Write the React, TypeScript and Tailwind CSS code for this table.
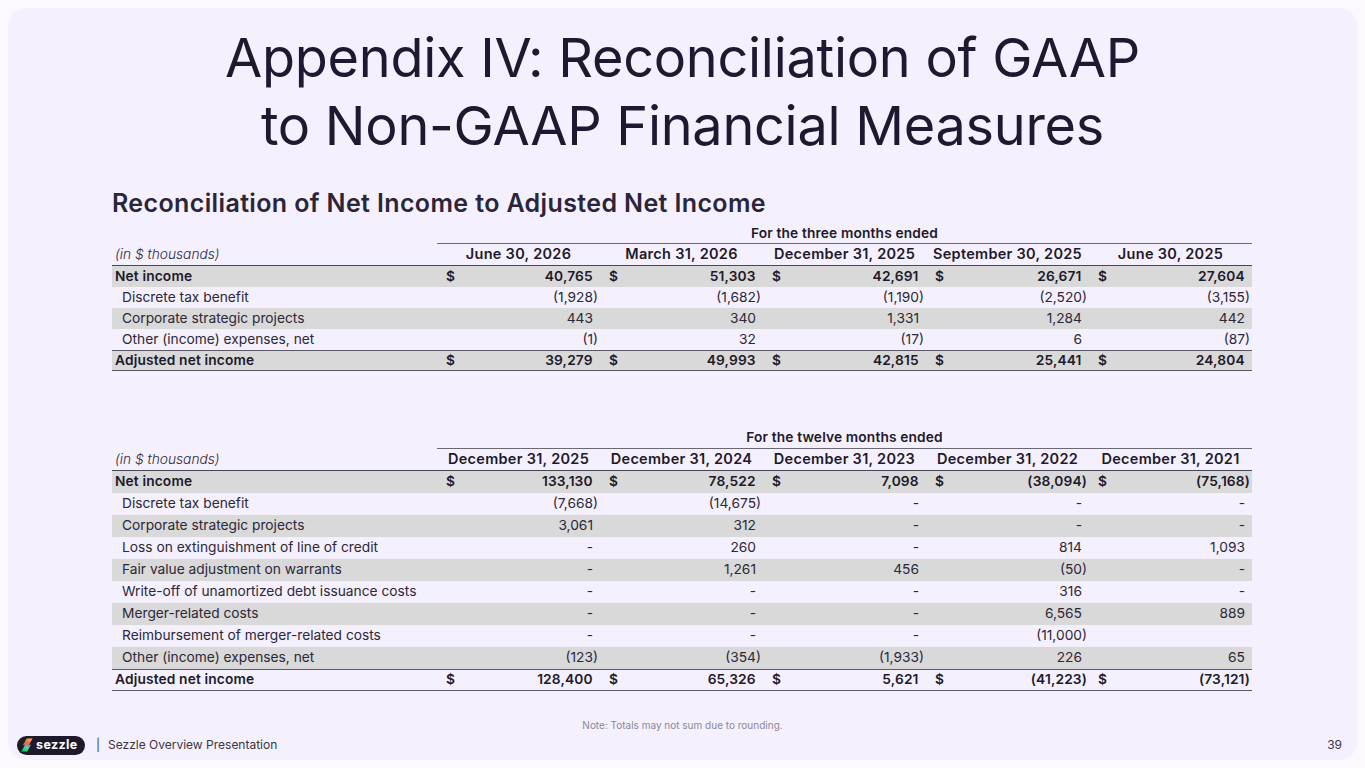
import React from "react";

type Row = {
  label: string;
  vals: string[];
  bold?: boolean;
  dollar?: boolean;
  gray?: boolean;
  total?: boolean;
};

const t1Headers = ["June 30, 2026", "March 31, 2026", "December 31, 2025", "September 30, 2025", "June 30, 2025"];
const t1Rows: Row[] = [
  { label: "Net income", vals: ["40,765", "51,303", "42,691", "26,671", "27,604"], bold: true, dollar: true, gray: true },
  { label: "Discrete tax benefit", vals: ["(1,928)", "(1,682)", "(1,190)", "(2,520)", "(3,155)"] },
  { label: "Corporate strategic projects", vals: ["443", "340", "1,331", "1,284", "442"], gray: true },
  { label: "Other (income) expenses, net", vals: ["(1)", "32", "(17)", "6", "(87)"] },
  { label: "Adjusted net income", vals: ["39,279", "49,993", "42,815", "25,441", "24,804"], bold: true, dollar: true, gray: true, total: true },
];

const t2Headers = ["December 31, 2025", "December 31, 2024", "December 31, 2023", "December 31, 2022", "December 31, 2021"];
const t2Rows: Row[] = [
  { label: "Net income", vals: ["133,130", "78,522", "7,098", "(38,094)", "(75,168)"], bold: true, dollar: true, gray: true },
  { label: "Discrete tax benefit", vals: ["(7,668)", "(14,675)", "-", "-", "-"] },
  { label: "Corporate strategic projects", vals: ["3,061", "312", "-", "-", "-"], gray: true },
  { label: "Loss on extinguishment of line of credit", vals: ["-", "260", "-", "814", "1,093"] },
  { label: "Fair value adjustment on warrants", vals: ["-", "1,261", "456", "(50)", "-"], gray: true },
  { label: "Write-off of unamortized debt issuance costs", vals: ["-", "-", "-", "316", "-"] },
  { label: "Merger-related costs", vals: ["-", "-", "-", "6,565", "889"], gray: true },
  { label: "Reimbursement of merger-related costs", vals: ["-", "-", "-", "(11,000)", ""] },
  { label: "Other (income) expenses, net", vals: ["(123)", "(354)", "(1,933)", "226", "65"], gray: true },
  { label: "Adjusted net income", vals: ["128,400", "65,326", "5,621", "(41,223)", "(73,121)"], bold: true, dollar: true, total: true },
];

function Num({ v }: { v: string }) {
  const paren = v.endsWith(")");
  return (
    <span>
      {v}
      {!paren && v !== "" && <span className="invisible">)</span>}
    </span>
  );
}

function TableRow({ row, tall }: { row: Row; tall?: boolean }) {
  return (
    <div
      className={`grid grid-cols-[325px_repeat(5,163px)] items-center ${tall ? "h-[22px]" : "h-[21px]"} ${
        row.gray ? "bg-[#d9d9d9]" : ""
      } ${row.total ? "border-t border-b border-[#5c5966]" : ""} ${
        row.bold ? "font-semibold text-[#1d1a2b] tracking-[0.01em]" : "text-[#2b2838]"
      }`}
    >
      <div className={row.bold ? "pl-[3px]" : "pl-[10px]"}>{row.label}</div>
      {row.vals.map((v, i) => (
        <div key={i} className="flex justify-between pl-[9px] pr-[2px]">
          <span>{row.dollar ? "$" : ""}</span>
          <Num v={v} />
        </div>
      ))}
    </div>
  );
}

function Table({ title, headers, rows, tall }: { title: string; headers: string[]; rows: Row[]; tall?: boolean }) {
  return (
    <div className="w-[1140px] text-[13.75px] leading-none">
      <div className="grid grid-cols-[325px_815px]">
        <div />
        <div
          className={`text-center font-semibold text-[#1d1a2b] border-b border-[#6b6875] flex items-center justify-center tracking-[0.01em] ${
            tall ? "h-[21px]" : "h-[20px]"
          }`}
        >
          {title}
        </div>
      </div>
      <div className="grid grid-cols-[325px_repeat(5,163px)] items-center h-[22px] border-b border-[#4a4755]">
        <div className="pl-[3px] italic font-light text-[#2b2838]">(in $ thousands)</div>
        {headers.map((h) => (
          <div key={h} className="text-center font-semibold text-[14.5px] tracking-[0.02em] text-[#1d1a2b]">
            {h}
          </div>
        ))}
      </div>
      {rows.map((r) => (
        <TableRow key={r.label} row={r} tall={tall} />
      ))}
    </div>
  );
}

function SezzleLogo() {
  return (
    <div className="flex items-center h-[19px] w-[68px] rounded-full bg-[#1d1a2b] pl-[4px] gap-[3px]">
      <svg width="12" height="14" viewBox="0 0 12 14">
        <defs>
          <linearGradient id="gtop" x1="0" y1="1" x2="1" y2="0">
            <stop offset="0" stopColor="#a855f7" />
            <stop offset="0.45" stopColor="#f97316" />
            <stop offset="1" stopColor="#fdba74" />
          </linearGradient>
          <linearGradient id="gbot" x1="0" y1="1" x2="1" y2="0">
            <stop offset="0" stopColor="#10b981" />
            <stop offset="0.6" stopColor="#4ade80" />
            <stop offset="1" stopColor="#8b5cf6" />
          </linearGradient>
        </defs>
        <path d="M5.6 0.5 L11.5 0.5 L7.8 7.2 L1.9 7.2 Z" fill="url(#gtop)" />
        <path d="M4.2 6.8 L10.1 6.8 L6.2 13.5 L0.3 13.5 Z" fill="url(#gbot)" />
      </svg>
      <span className="text-white font-bold text-[12.5px] leading-none tracking-[0.03em]">sezzle</span>
    </div>
  );
}

export default function App() {
  return (
    <div className="w-[1365px] h-[768px] bg-[#fbf9fe] p-[8px]" style={{ fontFamily: "Inter, 'Noto Sans', sans-serif" }}>
      <div className="relative h-full w-full rounded-[18px] bg-[#f5f0fd] flex flex-col">
        <h1 className="pt-[16px] text-center text-[54px] leading-[68px] font-normal text-[#1e1830] tracking-[-0.005em]">
          Appendix IV: Reconciliation of GAAP
          <br />
          to Non-GAAP Financial Measures
        </h1>
        <div className="pl-[104px]">
          <h2 className="mt-[28px] text-[25px] leading-[30px] font-semibold text-[#2a2538] tracking-[0.015em]">
            Reconciliation of Net Income to Adjusted Net Income
          </h2>
          <div className="mt-[6px]">
            <Table title="For the three months ended" headers={t1Headers} rows={t1Rows} />
          </div>
          <div className="mt-[57px]">
            <Table title="For the twelve months ended" headers={t2Headers} rows={t2Rows} tall />
          </div>
        </div>
        <div className="mt-[27px] text-center text-[10px] leading-[14px] text-[#8c8799]">
          Note: Totals may not sum due to rounding.
        </div>
        <div className="mt-auto mb-[5px] flex items-center justify-between pl-[9px] pr-[15px] h-[20px]">
          <div className="flex items-center">
            <SezzleLogo />
            <span className="ml-[11px] text-[12px] text-[#3a3545]">|</span>
            <span className="ml-[8px] text-[12px] text-[#3a3545]">Sezzle Overview Presentation</span>
          </div>
          <span className="text-[12px] text-[#3a3545]">39</span>
        </div>
      </div>
    </div>
  );
}
